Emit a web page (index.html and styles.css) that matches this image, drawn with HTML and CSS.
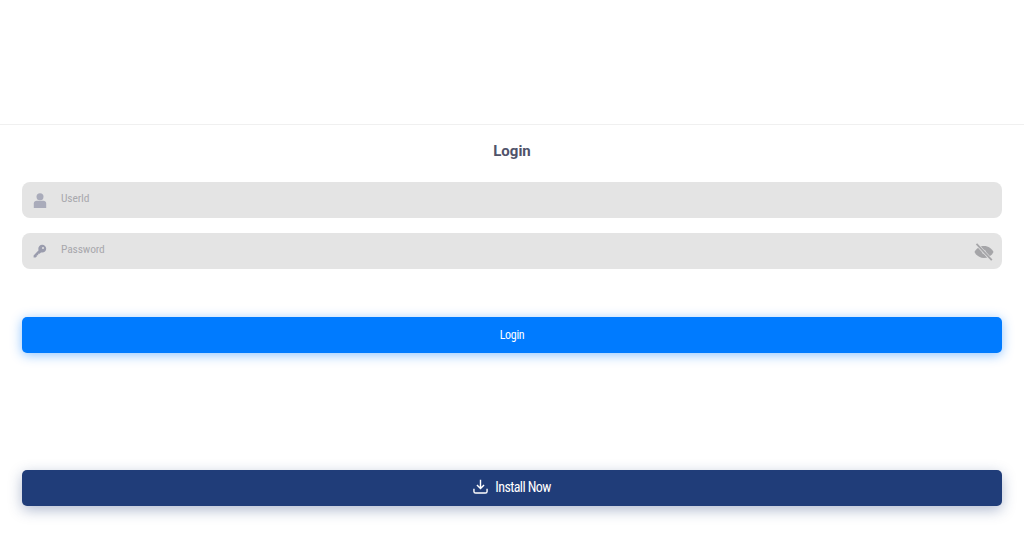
FILE: index.html
```html
<!DOCTYPE html>
<html>
<head>
<meta charset="utf-8">
<title>Login</title>
<link rel="stylesheet" href="styles.css">
</head>
<body>
	<div class="topBar"></div>

	<h1 class="pageTitle">Login</h1>

	<form class="loginForm">
		<!--user id-->
		<div class="field">
			<svg class="fieldIcon" viewBox="0 0 14 15" width="14" height="15">
				<circle cx="7" cy="3.7" r="3.5" fill="#a9abba"/>
				<path d="M0.8 15V10.5C0.8 8.8 2 7.8 3.6 7.8H10.4C12 7.8 13.2 8.8 13.2 10.5V15Z" fill="#a9abba"/>
			</svg>
			<span class="fieldText">UserId</span>
		</div>
		<!--password-->
		<div class="field">
			<svg class="fieldIcon" viewBox="0 0 14 14" width="14" height="14">
				<path d="M9.2 0.8C11.4 0.8 13.2 2.6 13.2 4.8C13.2 7 11.4 8.6 9.2 8.6C8.8 8.6 8.4 8.5 8 8.4L6.6 9.8H5.2V11.2H3.8V12.6L2.6 13.6H0.6V11.4L5.6 6.2C5.4 5.8 5.3 5.3 5.3 4.8C5.3 2.6 7 0.8 9.2 0.8Z" fill="#9a9cad"/>
				<circle cx="10" cy="4" r="1" fill="#e3e3e3"/>
			</svg>
			<span class="fieldText">Password</span>
			<svg class="eyeIcon" viewBox="0 0 20 18" width="20" height="18">
				<path d="M10 3C5.6 3 2 5.7 0.5 9C2 12.3 5.6 15 10 15C14.4 15 18 12.3 19.5 9C18 5.7 14.4 3 10 3Z" fill="#a5a5a8"/>
				<circle cx="10" cy="9" r="2.2" fill="#c4c4c6"/>
				<path d="M2.5 1L17.5 17" stroke="#e3e3e3" stroke-width="3"/>
				<path d="M2.5 0.8L17.8 17.2" stroke="#a5a5a8" stroke-width="1.7"/>
			</svg>
		</div>

		<button type="button" class="btn btnLogin">Login</button>
		<button type="button" class="btn btnInstall">
			<svg class="installIcon" viewBox="0 0 16 16" width="15" height="15">
				<path d="M8 0.8V10M4.2 6.4L8 10.2L11.8 6.4M1 10.5V13.2C1 14.2 1.8 15 2.8 15H13.2C14.2 15 15 14.2 15 13.2V10.5" fill="none" stroke="#fff" stroke-width="1.5"/>
			</svg>
			<span>Install Now</span>
		</button>
	</form>
</body>
</html>
```

FILE: styles.css
```css
html, body {
	margin: 0;
	padding: 0;
	background-color: #fff;
	font-family: "Roboto", "Liberation Sans", sans-serif;
}

.topBar {
	height: 124px;
	border-bottom: 1px solid #f0f0f0;
}

.pageTitle {
	margin: 17px 0 22px;
	font-size: 15px;
	line-height: 18px;
	font-weight: 700;
	text-align: center;
	color: #50536a;
}

.loginForm {
	display: flex;
	flex-direction: column;
	padding: 0 22px 30px;
}

.field {
	display: flex;
	align-items: flex-start;
	height: 36.4px;
	margin-bottom: 14.6px;
	padding: 10px 8px 0 11px;
	box-sizing: border-box;
	border-radius: 8px;
	background-color: #e4e4e4;
}

.fieldIcon {
	flex: none;
	margin-top: 1px;
	margin-right: 14px;
}

.fieldText {
	font-size: 11.5px;
	line-height: 12px;
	letter-spacing: -0.12px;
	font-stretch: 75%;
	color: #a8a8ad;
}

.eyeIcon {
	flex: none;
	margin-left: auto;
}

.btn {
	display: flex;
	align-items: center;
	justify-content: center;
	height: 36px;
	border: 0;
	border-radius: 5px;
	font-family: "Roboto", "Liberation Sans", sans-serif;
	font-stretch: 75%;
	color: #fff;
}

.btnLogin {
	margin-top: 33px;
	background-color: #007bff;
	font-size: 12px;
	letter-spacing: -0.3px;
	box-shadow: 0 2px 12px rgba(0, 123, 255, 0.45);
}

.btnInstall {
	margin-top: 117px;
	padding-bottom: 2px;
	gap: 7px;
	background-color: #203d79;
	font-size: 14px;
	letter-spacing: -0.6px;
	box-shadow: 0 4px 14px rgba(32, 61, 121, 0.35);
}

.installIcon {
	margin-bottom: 1px;
}
```
